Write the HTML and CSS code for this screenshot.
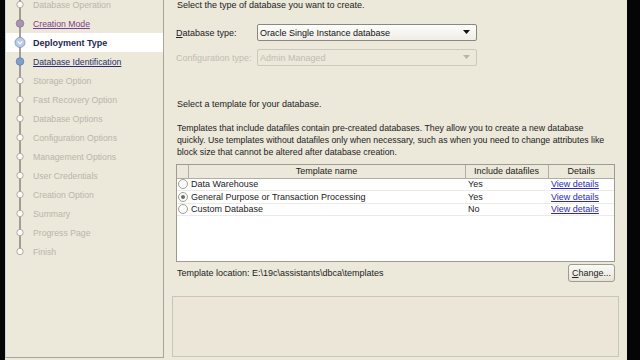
FILE: index.html
```html
<!DOCTYPE html>
<html>
<head>
<meta charset="utf-8">
<link rel="stylesheet" href="styles.css">
</head>
<body>
<div class="app">
  <aside class="nav">
    <ul class="steps">
      <li class="step off"><svg class="mk" width="14" height="19"><line x1="7" y1="0" x2="7" y2="19" class="ln"/><circle cx="7" cy="9.5" r="3.2" class="c-off"/></svg><span>Database Operation</span></li>
      <li class="step visited"><svg class="mk" width="14" height="19"><line x1="7" y1="0" x2="7" y2="19" class="ln"/><circle cx="7" cy="9.5" r="3.8" class="c-visited"/></svg><span>Creation Mode</span></li>
      <li class="step current"><svg class="mk" width="14" height="19"><line x1="7" y1="0" x2="7" y2="19" class="ln"/><circle cx="7" cy="9.5" r="5" class="c-cur"/><path d="M4.6 8.6 L7 10.8 L9.4 8.6" class="chev"/></svg><span>Deployment Type</span></li>
      <li class="step link"><svg class="mk" width="14" height="19"><line x1="7" y1="0" x2="7" y2="19" class="ln"/><circle cx="7" cy="9.5" r="3.8" class="c-link"/></svg><span>Database Identification</span></li>
      <li class="step off"><svg class="mk" width="14" height="19"><line x1="7" y1="0" x2="7" y2="19" class="ln"/><circle cx="7" cy="9.5" r="3.2" class="c-off"/></svg><span>Storage Option</span></li>
      <li class="step off"><svg class="mk" width="14" height="19"><line x1="7" y1="0" x2="7" y2="19" class="ln"/><circle cx="7" cy="9.5" r="3.2" class="c-off"/></svg><span>Fast Recovery Option</span></li>
      <li class="step off"><svg class="mk" width="14" height="19"><line x1="7" y1="0" x2="7" y2="19" class="ln"/><circle cx="7" cy="9.5" r="3.2" class="c-off"/></svg><span>Database Options</span></li>
      <li class="step off"><svg class="mk" width="14" height="19"><line x1="7" y1="0" x2="7" y2="19" class="ln"/><circle cx="7" cy="9.5" r="3.2" class="c-off"/></svg><span>Configuration Options</span></li>
      <li class="step off"><svg class="mk" width="14" height="19"><line x1="7" y1="0" x2="7" y2="19" class="ln"/><circle cx="7" cy="9.5" r="3.2" class="c-off"/></svg><span>Management Options</span></li>
      <li class="step off"><svg class="mk" width="14" height="19"><line x1="7" y1="0" x2="7" y2="19" class="ln"/><circle cx="7" cy="9.5" r="3.2" class="c-off"/></svg><span>User Credentials</span></li>
      <li class="step off"><svg class="mk" width="14" height="19"><line x1="7" y1="0" x2="7" y2="19" class="ln"/><circle cx="7" cy="9.5" r="3.2" class="c-off"/></svg><span>Creation Option</span></li>
      <li class="step off"><svg class="mk" width="14" height="19"><line x1="7" y1="0" x2="7" y2="19" class="ln"/><circle cx="7" cy="9.5" r="3.2" class="c-off"/></svg><span>Summary</span></li>
      <li class="step off"><svg class="mk" width="14" height="19"><line x1="7" y1="0" x2="7" y2="19" class="ln"/><circle cx="7" cy="9.5" r="3.2" class="c-off"/></svg><span>Progress Page</span></li>
      <li class="step off"><svg class="mk" width="14" height="19"><line x1="7" y1="0" x2="7" y2="9.5" class="ln"/><circle cx="7" cy="9.5" r="3.2" class="c-off"/></svg><span>Finish</span></li>
    </ul>
  </aside>
  <main class="content">
    <p class="intro">Select the type of database you want to create.</p>
    <div class="field">
      <label class="flabel"><u>D</u>atabase type:</label>
      <div class="select"><span>Oracle Single Instance database</span><svg class="arrow" width="8" height="5"><path d="M0 0 H7 L3.5 4 Z"/></svg></div>
    </div>
    <div class="field field-off">
      <label class="flabel">Configuration type:</label>
      <div class="select"><span>Admin Managed</span><svg class="arrow" width="8" height="5"><path d="M0 0 H7 L3.5 4 Z"/></svg></div>
    </div>
    <p class="sub">Select a template for your database.</p>
    <p class="para">Templates that include datafiles contain pre-created databases. They allow you to create a new database<br>quickly. Use templates without datafiles only when necessary, such as when you need to change attributes like<br>block size that cannot be altered after database creation.</p>
    <div class="grid">
      <table class="tpl">
        <colgroup><col class="c0"><col class="c1"><col class="c2"><col class="c3"></colgroup>
        <thead>
          <tr><th></th><th>Template name</th><th>Include datafiles</th><th>Details</th></tr>
        </thead>
        <tbody>
          <tr><td class="rad"><span class="radio"></span></td><td>Data Warehouse</td><td>Yes</td><td><a class="lnk">View details</a></td></tr>
          <tr><td class="rad"><span class="radio on"></span></td><td>General Purpose or Transaction Processing</td><td>Yes</td><td><a class="lnk">View details</a></td></tr>
          <tr><td class="rad"><span class="radio"></span></td><td>Custom Database</td><td>No</td><td><a class="lnk">View details</a></td></tr>
        </tbody>
      </table>
    </div>
    <div class="loc-row">
      <span>Template location: E:\19c\assistants\dbca\templates</span>
      <button class="btn"><u>C</u>hange...</button>
    </div>
    <div class="desc-box"></div>
  </main>
</div>
</body>
</html>
```
FILE: styles.css
```css
* { box-sizing: border-box; }
html, body { margin: 0; padding: 0; }
body {
  width: 640px; height: 360px; overflow: hidden;
  background: #050505;
  font-family: "Liberation Sans", Arial, sans-serif;
  font-size: 9px;
  color: #222;
}
.app {
  display: flex;
  margin-left: 5px;
  width: 622px;
  height: 360px;
  background: #ece8da;
}
.nav {
  width: 159px;
  height: 358px;
  border-left: 1px solid #c9d6e0;
  border-right: 1px solid #a9a498;
  border-bottom: 1px solid #a9a498;
  background: #ece8da;
  overflow: hidden;
}
.steps {
  list-style: none;
  margin: -5px 0 0 0;
  padding: 0;
}
.step {
  display: flex;
  align-items: center;
  height: 19px;
  padding-left: 7px;
  gap: 6px;
  color: #bab6aa;
  font-size: 8.7px;
}
.mk { display: block; flex: none; }
.ln { stroke: #8e8a84; stroke-width: 1.6; }
.c-off { fill: #fbfaf6; stroke: #a8a49c; stroke-width: 0.9; }
.c-visited { fill: #a892b0; stroke: #8c7898; stroke-width: 0.8; }
.c-cur { fill: #b9cbe4; stroke: #7f98bd; stroke-width: 0.9; }
.chev { fill: none; stroke: #ffffff; stroke-width: 1.3; }
.c-link { fill: #7f9fcc; stroke: #5f7fae; stroke-width: 0.8; }
.step.visited { color: #7a3f88; text-decoration: underline; }
.step.current { background: #ffffff; color: #1e2856; font-weight: bold; font-size: 9px; }
.step.link { color: #2a2f6a; text-decoration: underline; }

.content {
  flex: 1;
  display: flex;
  flex-direction: column;
  padding: 0 12px 0 13px;
}
.intro { margin: -1px 0 0 0; line-height: 12px; }
.field {
  display: flex;
  align-items: center;
  margin-top: 13px;
  margin-left: -1px;
}
.field-off { margin-top: 8px; }
.flabel { width: 81px; flex: none; }
.select {
  width: 220px;
  height: 17px;
  display: flex;
  align-items: center;
  justify-content: space-between;
  padding: 0 5px 0 2px;
  border: 1px solid #8a877e;
  border-radius: 2px;
  background: linear-gradient(#fdfdfb, #efede6);
  color: #111;
}
.arrow path { fill: #111; }
.field-off .flabel { color: #c1bdb1; }
.field-off .select {
  border-color: #ccc8bc;
  background: #ece8da;
  color: #c1bdb1;
}
.field-off .arrow path { fill: #b8b4a8; }
.sub { margin: 32px 0 0 0; line-height: 12px; }
.para {
  margin: 12px 0 0 0;
  line-height: 12px;
  font-size: 8.75px;
  white-space: nowrap;
}

.grid {
  margin-top: 6px;
  width: 439px;
  height: 98px;
  margin-left: -1px;
  border: 1px solid #9e9b92;
  background: #ffffff;
}
.tpl {
  width: 100%;
  border-collapse: collapse;
  table-layout: fixed;
}
.c0 { width: 11px; }
.c1 { width: 277px; }
.c2 { width: 83px; }
.c3 { width: 66px; }
.tpl th {
  height: 13px;
  padding: 0;
  font-weight: normal;
  background: #ece8da;
  border-right: 1px solid #b0ada3;
  border-bottom: 1px solid #b0ada3;
  text-align: center;
  color: #222;
}
.tpl th:last-child { border-right: none; }
.tpl td {
  height: 12.5px;
  padding: 0 0 0 3px;
  border-bottom: 1px solid #eceae6;
  white-space: nowrap;
  overflow: hidden;
}
.tpl td.rad { padding: 0; }
.radio {
  display: block;
  width: 10px;
  height: 10px;
  margin-left: 1px;
  border: 1px solid #a09d96;
  border-radius: 50%;
  background: #fbfbfa;
  position: relative;
}
.radio.on::after {
  content: "";
  position: absolute;
  left: 2px; top: 2px;
  width: 4px; height: 4px;
  border-radius: 50%;
  background: #6b6e68;
}
.lnk { color: #2b2bb0; text-decoration: underline; }

.loc-row {
  display: flex;
  align-items: center;
  justify-content: space-between;
  margin-top: 2px;
  height: 18px;
}
.btn {
  height: 18px;
  width: 47px;
  padding: 0;
  font-family: inherit;
  font-size: 9px;
  color: #222;
  border: 1px solid #9e9b92;
  border-radius: 3px;
  background: linear-gradient(#fbfaf7, #e7e3d8);
}
.desc-box {
  margin: 14px -4px 0 -5px;
  height: 61px;
  border: 1px solid #c9c5b8;
  background: #ebe6d8;
}
```
